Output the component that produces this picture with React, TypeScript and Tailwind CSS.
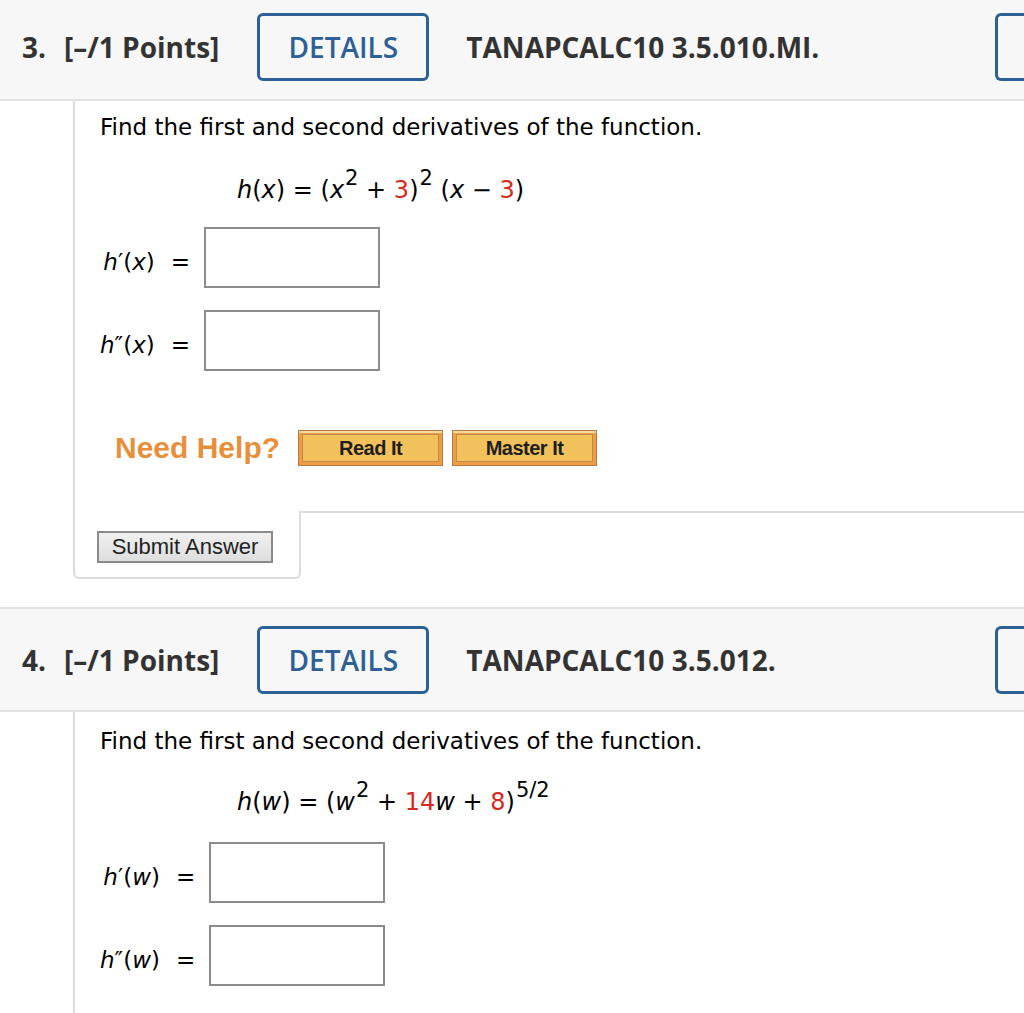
import type { ReactNode } from 'react';

const body = "font-['DejaVu_Sans','Verdana',sans-serif]";
const head = "font-['Open_Sans',sans-serif]";

function Header({ num, code, top }: { num: string; code: string; top?: boolean }) {
  return (
    <div
      className={`flex items-center bg-[#f7f7f7] border-b-2 border-[#e2e2e2] pl-[22px] overflow-hidden whitespace-nowrap ${head} ${
        top ? 'h-[101px] pb-[5px]' : 'h-[105px] border-t-2'
      }`}
    >
      <span className="text-[28px] font-bold text-[#333]">{num}</span>
      <span className="ml-[18px] text-[28px] font-bold text-[#333]">[–/1 Points]</span>
      <div className="ml-[38px] w-[172px] h-[68px] shrink-0 border-[3px] border-[#2d6096] rounded-[6px] flex items-center justify-center text-[28px] font-semibold text-[#2d6096]">
        DETAILS
      </div>
      <span className="ml-[37px] text-[28px] font-bold text-[#333]">{code}</span>
      <div className="ml-auto w-[29px] h-[68px] shrink-0 border-[3px] border-r-0 border-[#2d6096] rounded-l-[6px]" />
    </div>
  );
}

function Row({ label, children }: { label: ReactNode; children?: ReactNode }) {
  return (
    <>
      <div className="text-right text-[23px] leading-[28px] pt-[21px] whitespace-nowrap">{label}</div>
      <div className="w-[176px] h-[61px] border-2 border-[#8c8c8c] bg-white">{children}</div>
    </>
  );
}

function Lbl({ f, primes, v }: { f: string; primes: string; v: string }) {
  return (
    <span>
      <i>{f}</i>
      {primes}(<i>{v}</i>)<span className="ml-[16px]">=</span>
    </span>
  );
}

const red = 'text-[#d42a20]';
const sup = 'text-[21px] leading-none top-[-0.62em] ml-[1px]';

function HelpButton({ text }: { text: string }) {
  return (
    <div className="w-[145px] h-[36px] border border-[#b47a42] bg-[#ef9d43] p-[3px] shadow-[inset_0_2px_0_#f8d9a0]">
      <div className="h-full border border-[#c08a4c] bg-[#f3c15c] flex items-center justify-center font-['Liberation_Sans',Arial,sans-serif] font-bold text-[20px] text-[#1e1e1e] tracking-[-0.5px]">
        {text}
      </div>
    </div>
  );
}

export default function App() {
  return (
    <div className={`w-[1024px] h-[1013px] overflow-hidden bg-white text-black ${body}`}>
      <Header num="3." code="TANAPCALC10 3.5.010.MI." top />

      <div className="ml-[73px]">
        <div className="border-l-2 border-[#dcdcdc] pl-[25px] pt-[12px] pb-[45px]">
          <p className="text-[23px] leading-[28px]">Find the first and second derivatives of the function.</p>
          <p className="ml-[137px] mt-[34px] text-[24px] leading-[30px] whitespace-nowrap">
            <i>h</i>(<i>x</i>) = (<i>x</i>
            <sup className={sup}>2</sup> + <span className={red}>3</span>)<sup className={sup}>2</sup>&nbsp;(
            <i>x</i> − <span className={red}>3</span>)
          </p>
          <div className="mt-[22px] grid grid-cols-[auto_auto] justify-start gap-x-[14px] gap-y-[22px]">
            <Row label={<Lbl f="h" primes="′" v="x" />} />
            <Row label={<Lbl f="h" primes="″" v="x" />} />
          </div>
          <div className="mt-[59px] ml-[15px] flex items-center gap-[9px] h-[36px]">
            <span className="font-['Liberation_Sans',Arial,sans-serif] font-bold text-[30px] leading-none text-[#e88f3c] mr-[9px]">
              Need Help?
            </span>
            <HelpButton text="Read It" />
            <HelpButton text="Master It" />
          </div>
        </div>
        <div className="flex">
          <div className="w-[228px] h-[68px] border-l-2 border-b-2 border-r-2 border-[#dcdcdc] rounded-b-[6px] pt-[20px] pl-[22px]">
            <button className="w-[176px] h-[32px] border-2 border-[#8a8a8a] bg-gradient-to-b from-[#f0f0f0] to-[#dedede] font-['Liberation_Sans',Arial,sans-serif] text-[22px] text-[#222] leading-none">
              Submit Answer
            </button>
          </div>
          <div className="flex-1 border-t-2 border-[#dcdcdc]" />
        </div>
      </div>

      <div className="mt-[28px]">
        <Header num="4." code="TANAPCALC10 3.5.012." />
      </div>

      <div className="ml-[73px]">
        <div className="border-l-2 border-[#dcdcdc] pl-[25px] pt-[15px] pb-[40px]">
          <p className="text-[23px] leading-[28px]">Find the first and second derivatives of the function.</p>
          <p className="ml-[137px] mt-[32px] text-[24px] leading-[30px] whitespace-nowrap">
            <i>h</i>(<i>w</i>) = (<i>w</i>
            <sup className={sup}>2</sup> + <span className={red}>14</span>
            <i>w</i> + <span className={red}>8</span>)<sup className={sup}>5/2</sup>
          </p>
          <div className="mt-[25px] grid grid-cols-[auto_auto] justify-start gap-x-[14px] gap-y-[22px]">
            <Row label={<Lbl f="h" primes="′" v="w" />} />
            <Row label={<Lbl f="h" primes="″" v="w" />} />
          </div>
        </div>
      </div>
    </div>
  );
}
